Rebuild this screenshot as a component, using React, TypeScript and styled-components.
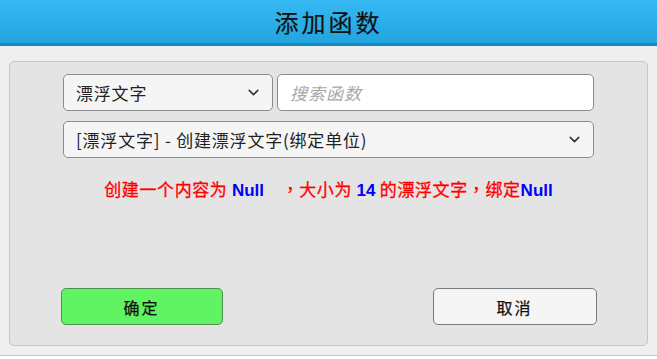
import React from "react";
import styled, { createGlobalStyle } from "styled-components";
import { ChevronDown } from "lucide-react";

const GlobalStyle = createGlobalStyle`
  html, body {
    margin: 0;
    padding: 0;
    background: #ffffff;
  }
  body {
    font-family: "Noto Sans CJK SC", "Liberation Sans", sans-serif;
  }
`;

const Window = styled.div`
  width: 657px;
  height: 356px;
  background: #efefef;
  border-bottom: 1px solid #c4c4c4;
  box-sizing: border-box;
  display: flex;
  flex-direction: column;
`;

const TitleBar = styled.div`
  height: 43px;
  background: linear-gradient(#36baf3, #22a4df);
  border-bottom: 3px solid #1889c1;
  display: flex;
  align-items: center;
  justify-content: center;
  flex-shrink: 0;
`;

const Title = styled.h1`
  margin: 0;
  font-size: 24px;
  font-weight: 400;
  letter-spacing: 3px;
  color: #111;
  -webkit-text-stroke: 0.2px #111;
`;

const Panel = styled.div`
  margin: 15px 9px 0 9px;
  height: 285px;
  box-sizing: border-box;
  background: #e4e4e4;
  border: 1px solid #c6c6c6;
  border-radius: 5px;
  padding: 12px 0 20px;
  display: flex;
  flex-direction: column;
  align-items: center;
`;

const Row = styled.div<{ $gap?: number }>`
  width: 531px;
  display: flex;
  gap: 4px;
  margin-bottom: ${(p) => p.$gap ?? 0}px;
`;

const Field = styled.div<{ $width?: number }>`
  ${(p) => (p.$width ? `width: ${p.$width}px; flex-shrink: 0;` : "flex: 1;")}
  height: 37px;
  box-sizing: border-box;
  background: #ffffff;
  border: 1px solid #8c8c8c;
  border-radius: 5px;
  display: flex;
  align-items: center;
  justify-content: space-between;
  padding: 0 10px 0 12px;
`;

const Select = styled(Field)`
  background: #f5f5f5;
`;

const FieldText = styled.span`
  font-size: 17px;
  letter-spacing: 0.8px;
  color: #222;
  white-space: nowrap;
`;

const Placeholder = styled.span`
  font-size: 17px;
  letter-spacing: 1px;
  font-style: italic;
  color: #a8a8a8;
`;

const Message = styled.p`
  margin: 18px 0 0;
  font-size: 17px;
  font-weight: 400;
  letter-spacing: 0.6px;
  color: #ff0000;
  white-space: pre;
  -webkit-text-stroke: 0.3px #ff0000;
`;

const Comma = styled.span`
  font-family: "Noto Sans CJK TC", sans-serif;
`;

const Value = styled.span`
  font-family: "Liberation Sans", sans-serif;
  font-size: 17px;
  font-weight: 700;
  letter-spacing: 0;
  color: #0000ff;
  -webkit-text-stroke: 0;
`;

const Footer = styled.div`
  margin-top: auto;
  width: 536px;
  display: flex;
  justify-content: space-between;
`;

const Button = styled.button<{ $primary?: boolean }>`
  width: ${(p) => (p.$primary ? 162 : 164)}px;
  height: 37px;
  border-radius: 5px;
  border: 1px solid ${(p) => (p.$primary ? "#4e8f4e" : "#7a7a7a")};
  background: ${(p) => (p.$primary ? "#60f462" : "#f5f5f5")};
  font-family: "Noto Sans CJK SC", sans-serif;
  font-size: 16px;
  font-weight: 400;
  letter-spacing: 2px;
  color: #111;
  -webkit-text-stroke: 0.25px #111;
  cursor: pointer;
`;

export default function App() {
  return (
    <>
      <GlobalStyle />
      <Window>
        <TitleBar>
          <Title>添加函数</Title>
        </TitleBar>
        <Panel>
          <Row $gap={10}>
            <Select $width={210}>
              <FieldText>漂浮文字</FieldText>
              <ChevronDown size={17} strokeWidth={2.2} color="#333" />
            </Select>
            <Field>
              <Placeholder>搜索函数</Placeholder>
            </Field>
          </Row>
          <Row>
            <Select>
              <FieldText>[漂浮文字] - 创建漂浮文字(绑定单位)</FieldText>
              <ChevronDown size={17} strokeWidth={2.2} color="#333" />
            </Select>
          </Row>
          <Message>
            创建一个内容为 <Value>Null</Value>    <Comma>，</Comma>大小为 <Value>14</Value> 的漂浮文字<Comma>，</Comma>绑定<Value>Null</Value>
          </Message>
          <Footer>
            <Button $primary>确定</Button>
            <Button>取消</Button>
          </Footer>
        </Panel>
      </Window>
    </>
  );
}
